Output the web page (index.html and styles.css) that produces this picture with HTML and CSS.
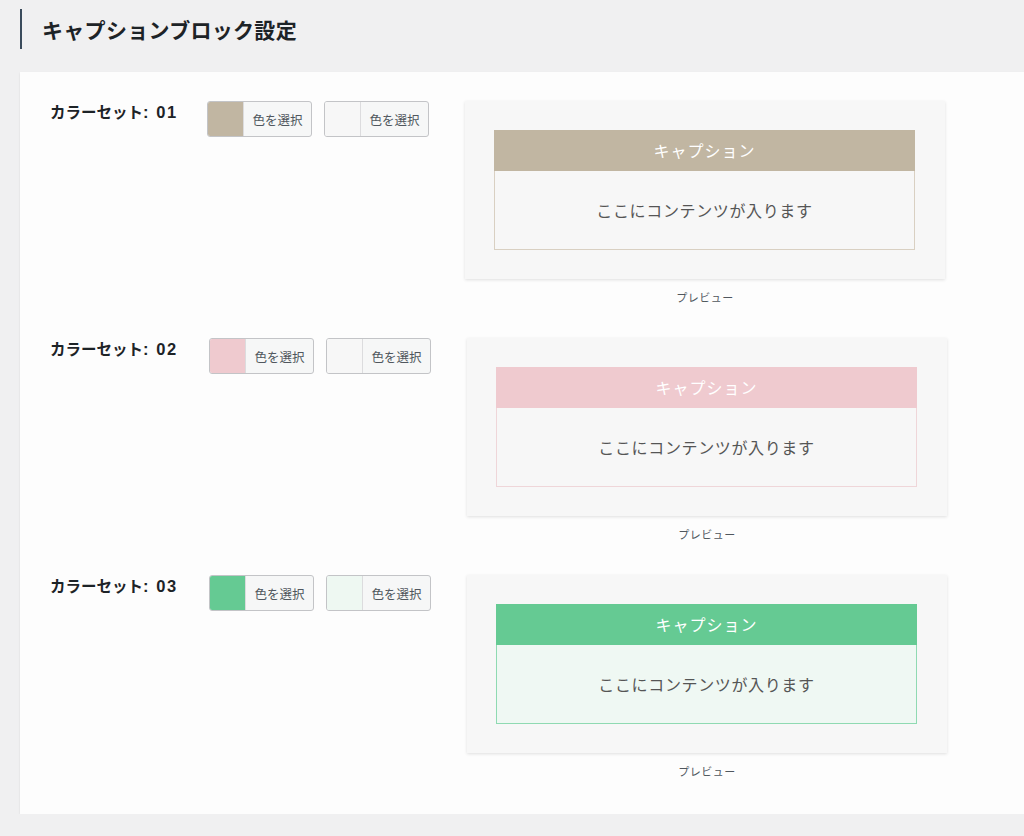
FILE: index.html
```html
<!DOCTYPE html>
<html lang="ja">
<head>
<meta charset="utf-8">
<title>キャプションブロック設定</title>
<link rel="stylesheet" href="styles.css">
</head>
<body>
<h2 class="page-title">キャプションブロック設定</h2>
<div class="panel">
  <div class="row">
    <div class="label">カラーセット<span class="num">: 01</span></div>
    <div class="pickers">
      <button class="picker"><span class="swatch sw-tan"></span><span class="picker-text">色を選択</span></button>
      <button class="picker"><span class="swatch sw-light"></span><span class="picker-text">色を選択</span></button>
    </div>
    <div class="preview">
      <div class="card">
        <div class="cap cap-tan">
          <div class="cap-head">キャプション</div>
          <div class="cap-body">ここにコンテンツが入ります</div>
        </div>
      </div>
      <div class="preview-label">プレビュー</div>
    </div>
  </div>
  <div class="row row-shift">
    <div class="label">カラーセット<span class="num">: 02</span></div>
    <div class="pickers">
      <button class="picker"><span class="swatch sw-pink"></span><span class="picker-text">色を選択</span></button>
      <button class="picker"><span class="swatch sw-light"></span><span class="picker-text">色を選択</span></button>
    </div>
    <div class="preview">
      <div class="card">
        <div class="cap cap-pink">
          <div class="cap-head">キャプション</div>
          <div class="cap-body">ここにコンテンツが入ります</div>
        </div>
      </div>
      <div class="preview-label">プレビュー</div>
    </div>
  </div>
  <div class="row row-shift">
    <div class="label">カラーセット<span class="num">: 03</span></div>
    <div class="pickers">
      <button class="picker"><span class="swatch sw-green"></span><span class="picker-text">色を選択</span></button>
      <button class="picker"><span class="swatch sw-mint"></span><span class="picker-text">色を選択</span></button>
    </div>
    <div class="preview">
      <div class="card">
        <div class="cap cap-green">
          <div class="cap-head">キャプション</div>
          <div class="cap-body">ここにコンテンツが入ります</div>
        </div>
      </div>
      <div class="preview-label">プレビュー</div>
    </div>
  </div>
</div>
</body>
</html>
```
FILE: styles.css
```css
* { box-sizing: border-box; }
body {
  margin: 0;
  background: #f0f0f1;
  font-family: "Noto Sans CJK JP", "Noto Sans", sans-serif;
  color: #1d2327;
}
.page-title {
  margin: 9px 0 0 20px;
  height: 40px;
  line-height: 40px;
  border-left: 2px solid #3a4b5c;
  padding-left: 20px;
  font-size: 21px;
  font-weight: 700;
  letter-spacing: 0.3px;
}
.panel {
  margin: 23px 0 0 20px;
  background: #fdfdfd;
  padding: 29px 0 35px 0;
  box-shadow: 0 1px 2px rgba(0,0,0,0.1);
  display: flex;
  flex-direction: column;
  gap: 33px;
}
.row {
  display: flex;
  align-items: flex-start;
}
.label {
  width: 187px;
  padding-left: 30px;
  font-size: 15.5px;
  font-weight: 700;
  line-height: 20px;
  color: #1d2327;
}
.num {
  font-family: "Liberation Sans", "Noto Sans", sans-serif;
  font-size: 16.5px;
  letter-spacing: 1.6px;
}
.pickers {
  display: flex;
  gap: 12px;
  width: 258px;
}
.row-shift .pickers,
.row-shift .preview { margin-left: 2px; }
.row-shift .preview { margin-left: 0; }
.row-shift .pickers { width: 258px; }
.picker {
  display: flex;
  width: 105px;
  height: 36px;
  padding: 0;
  border: 1px solid #c3c4c7;
  border-radius: 3px;
  background: #f6f7f7;
  overflow: hidden;
  font-family: inherit;
}
.swatch {
  width: 36px;
  height: 100%;
  border-right: 1px solid #dcdcde;
}
.sw-tan { background: #c1b6a2; }
.sw-light { background: #f7f7f7; }
.sw-pink { background: #efcacf; }
.sw-green { background: #65ca93; }
.sw-mint { background: #eef8f2; }
.picker-text {
  flex: 1;
  align-self: center;
  text-align: center;
  font-size: 12.5px;
  color: #50575e;
}
.preview {
  display: flex;
  flex-direction: column;
  align-items: center;
  width: 480px;
}
.card {
  width: 480px;
  background: #f7f7f7;
  padding: 29px 30px 29px 29px;
  box-shadow: 0 1px 3px rgba(0,0,0,0.12);
}
.cap-head {
  height: 41px;
  line-height: 41px;
  text-align: center;
  color: #fff;
  font-size: 16px;
  letter-spacing: 0.06em;
}
.cap-body {
  height: 79px;
  line-height: 78px;
  text-align: center;
  font-size: 16px;
  letter-spacing: 0.04em;
  color: #555;
  border: 1px solid;
  border-top: 0;
  background: #f7f7f7;
}
.cap-tan .cap-head { background: #c1b6a2; }
.cap-tan .cap-body { border-color: #d9d0c2; }
.cap-pink .cap-head { background: #efcacf; }
.cap-pink .cap-body { border-color: #efd6d9; }
.cap-green .cap-head { background: #65ca93; }
.cap-green .cap-body { border-color: #8fdab2; background: #eff8f3; }
.preview-label {
  margin-top: 10px;
  font-size: 11px;
  line-height: 16px;
  letter-spacing: 0.05em;
  color: #50575e;
}
```
